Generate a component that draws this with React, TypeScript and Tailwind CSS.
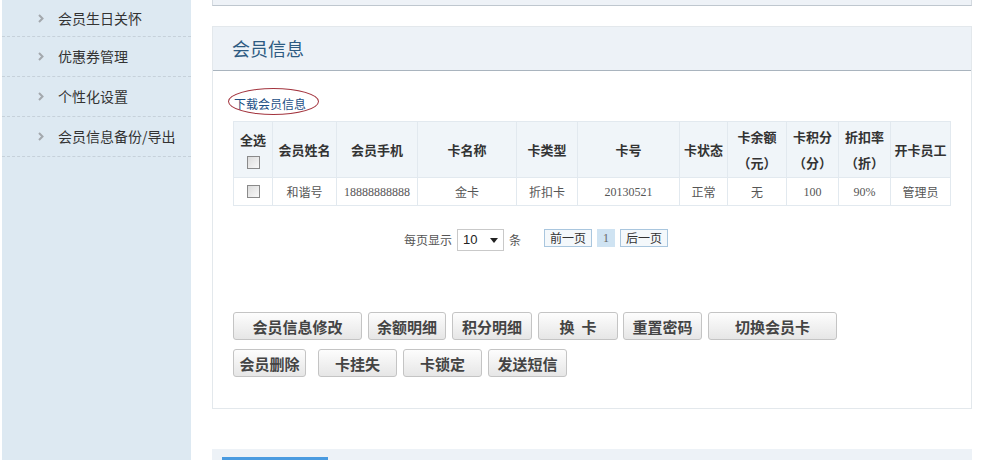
import React from "react";

const font = { fontFamily: '"Noto Sans CJK SC", "Liberation Sans", sans-serif' };

function Box() {
  return (
    <span className="block w-[13px] h-[13px] border border-[#8a8a8a] bg-gradient-to-br from-[#dcdcdc] to-[#f8f8f8]" />
  );
}

const cols = [39, 64, 81, 99, 61, 102, 48, 59, 52, 52, 60];

export default function App() {
  const side = ["会员生日关怀", "优惠券管理", "个性化设置", "会员信息备份/导出"];
  const btn =
    "h-[28px] border border-[#c4c4c4] rounded-[3px] bg-gradient-to-b from-[#fdfdfd] to-[#e6e6e6] text-[15px] font-bold text-[#444] flex items-center justify-center leading-none";
  const cell = "border border-[#e2e9ef]";
  return (
    <div className="w-[1007px] h-[460px] overflow-hidden bg-white flex" style={font}>
      <div className="ml-[2px] w-[189px] h-full bg-[#dde9f2] flex flex-col">
        {side.map((s, i) => (
          <div
            key={s}
            className={`${i === 0 ? "h-[37px]" : "h-[40px]"} shrink-0 border-b border-dashed border-[#c6d1da] flex items-center pl-[36px] text-[14px] text-[#333]`}
          >
            <span className="w-[20px] flex items-center">
              <svg width="6" height="9" viewBox="0 0 6 9">
                <path d="M1 1l3.5 3.5L1 8" fill="none" stroke="#a3a8ad" strokeWidth="2" />
              </svg>
            </span>
            <span>{s}</span>
          </div>
        ))}
      </div>
      <div className="ml-[21px] w-[760px] h-[460px] flex flex-col">
        <div className="h-[6px] shrink-0 bg-[#eef2f7] border border-t-0 border-[#d4dae0] border-b-[#bfc7cf]" />
        <div className="mt-[20px] shrink-0 border border-[#e3e8ec] bg-white">
          <div className="h-[44px] bg-[#edf2f7] border-b border-[#a9b4be] flex items-center pl-[19px] text-[18px] text-[#2d5b82]">
            会员信息
          </div>
          <div className="pl-[20px] pb-[31px]">
            <div className="mt-[19px] h-[27px] flex items-center">
              <span className="relative text-[12px] text-[#1d4f86] pl-[1px]">
                下载会员信息
                <span className="absolute left-[-5px] top-[-7px] w-[91px] h-[27px] rounded-[50%] border border-[#a3343e]" />
              </span>
            </div>
            <table className="mt-[4px] border-collapse text-center" style={{ tableLayout: "fixed", width: 717 }}>
              <colgroup>
                {cols.map((c, i) => (
                  <col key={i} style={{ width: c }} />
                ))}
              </colgroup>
              <thead>
                <tr className="h-[56px] bg-[#f0f5f9] text-[13px] font-bold text-[#333]">
                  <th className={cell}>
                    <div className="flex flex-col items-center">
                      <div className="leading-[20px]">全选</div>
                      <div className="mt-[6px]"><Box /></div>
                    </div>
                  </th>
                  <th className={cell}>会员姓名</th>
                  <th className={cell}>会员手机</th>
                  <th className={cell}>卡名称</th>
                  <th className={cell}>卡类型</th>
                  <th className={cell}>卡号</th>
                  <th className={cell}>卡状态</th>
                  <th className={cell}><div className="leading-[26px]">卡余额<br />（元）</div></th>
                  <th className={cell}><div className="leading-[26px]">卡积分<br />（分）</div></th>
                  <th className={cell}><div className="leading-[26px]">折扣率<br />（折）</div></th>
                  <th className={cell}>开卡员工</th>
                </tr>
              </thead>
              <tbody>
                <tr className="h-[28px] text-[12px] text-[#555]">
                  <td className={cell}><div className="flex justify-center"><Box /></div></td>
                  <td className={cell}>和谐号</td>
                  <td className={cell} style={{ fontFamily: '"Liberation Serif", serif' }}>18888888888</td>
                  <td className={cell}>金卡</td>
                  <td className={cell}>折扣卡</td>
                  <td className={cell} style={{ fontFamily: '"Liberation Serif", serif' }}>20130521</td>
                  <td className={cell}>正常</td>
                  <td className={cell}>无</td>
                  <td className={cell} style={{ fontFamily: '"Liberation Serif", serif' }}>100</td>
                  <td className={cell} style={{ fontFamily: '"Liberation Serif", serif' }}>90%</td>
                  <td className={cell}>管理员</td>
                </tr>
              </tbody>
            </table>
            <div className="mt-[23px] ml-[171px] flex items-center text-[12px] text-[#555] h-[22px]">
              <span>每页显示</span>
              <span className="ml-[5px] w-[47px] h-[22px] border border-[#c9c9c9] bg-white flex items-center pl-[5px] text-[13px] text-[#222]" style={{ fontFamily: '"Liberation Sans", sans-serif' }}>
                10
                <svg className="ml-auto mr-[5px]" width="8" height="5" viewBox="0 0 8 5"><path d="M0 0h8L4 5z" fill="#222" /></svg>
              </span>
              <span className="ml-[5px]">条</span>
              <span className="ml-[23px] self-start h-[18px] px-[5px] border border-[#a9c6de] bg-[#f4f8fb] flex items-center text-[12px] text-[#333]">前一页</span>
              <span className="ml-[5px] self-start w-[18px] h-[18px] bg-[#cfe3f2] flex items-center justify-center text-[12px] text-[#666]" style={{ fontFamily: '"Liberation Serif", serif' }}>1</span>
              <span className="ml-[5px] self-start h-[18px] px-[5px] border border-[#a9c6de] bg-[#f4f8fb] flex items-center text-[12px] text-[#333]">后一页</span>
            </div>
            <div className="mt-[61px] flex">
              <div className={`${btn} w-[129px]`}>会员信息修改</div>
              <div className={`${btn} w-[78px] ml-[6px]`}>余额明细</div>
              <div className={`${btn} w-[80px] ml-[6px]`}>积分明细</div>
              <div className={`${btn} w-[80px] ml-[6px]`}>换&nbsp;&nbsp;卡</div>
              <div className={`${btn} w-[79px] ml-[5px]`}>重置密码</div>
              <div className={`${btn} w-[129px] ml-[6px]`}>切换会员卡</div>
            </div>
            <div className="mt-[9px] flex">
              <div className={`${btn} w-[73px]`}>会员删除</div>
              <div className={`${btn} w-[79px] ml-[12px]`}>卡挂失</div>
              <div className={`${btn} w-[79px] ml-[6px]`}>卡锁定</div>
              <div className={`${btn} w-[79px] ml-[6px]`}>发送短信</div>
            </div>
          </div>
        </div>
        <div className="mt-[40px] shrink-0 h-[20px] bg-[#edf2f7] pl-[10px] pt-[8px]">
          <div className="w-[106px] h-[4px] bg-[#4a9be0]" />
        </div>
      </div>
    </div>
  );
}
